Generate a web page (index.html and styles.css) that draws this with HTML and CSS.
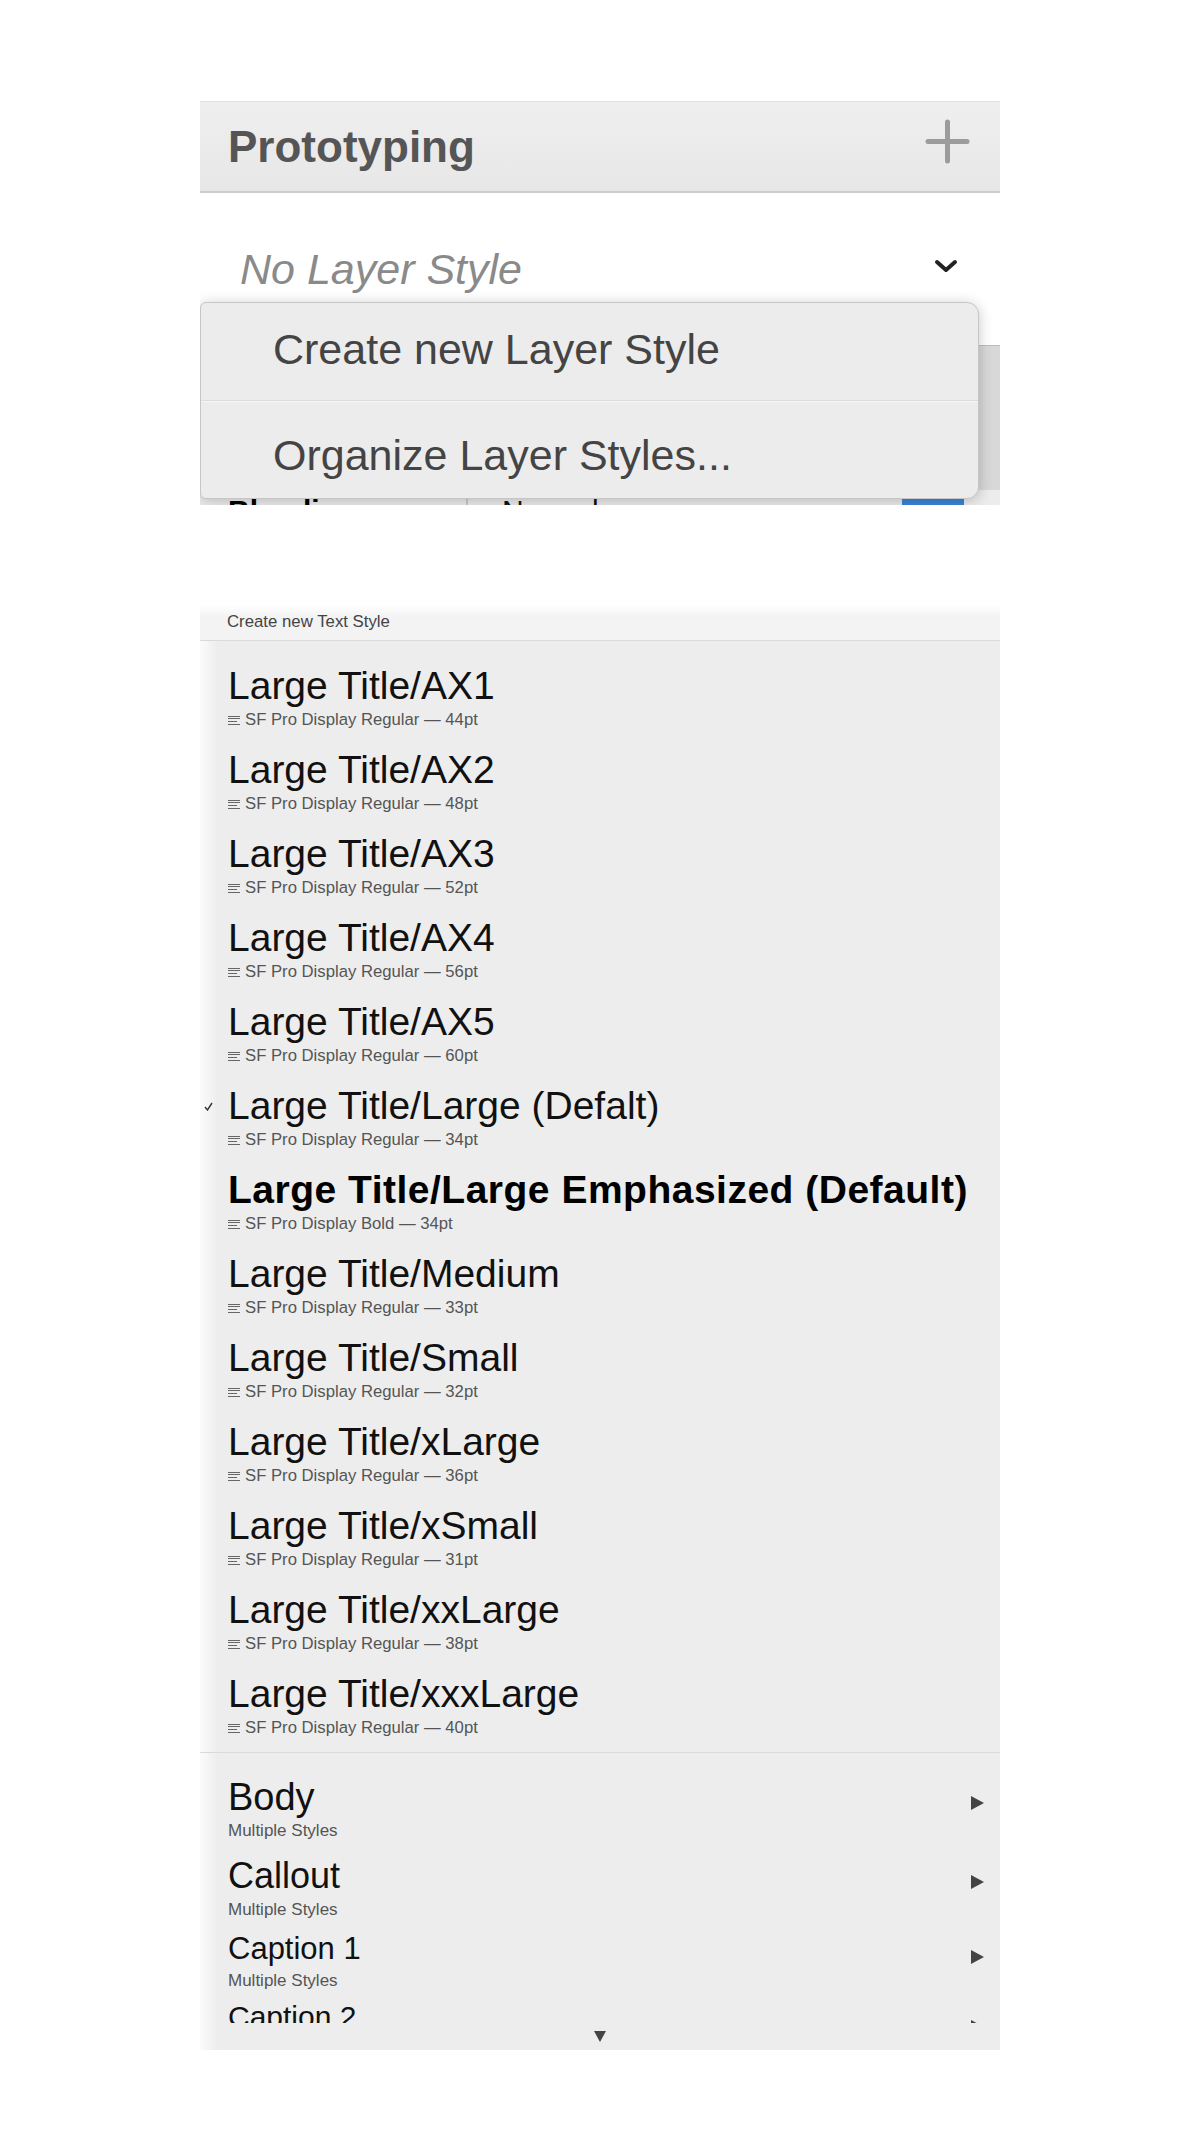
FILE: index.html
```html
<!DOCTYPE html>
<html lang="en">

<head>
    <meta charset="UTF-8">
    <meta name="viewport" content="width=device-width, initial-scale=1.0">
    <title>Layer &amp; Text Styles</title>
    <link rel="stylesheet" href="styles.css">
</head>

<body>
    <div class="page">

        <!-- Layer style picker -->
        <section class="inspector">
            <header class="inspector-head">
                <h2>Prototyping</h2>
                <svg class="plus" width="45" height="45" viewBox="0 0 45 45">
                    <path d="M22.5 3v39M3 22.5h39" stroke="#9c9c9c" stroke-width="5" stroke-linecap="round" fill="none" />
                </svg>
            </header>

            <div class="style-select">
                <span class="style-name">No Layer Style</span>
                <svg class="chevron" width="26" height="16" viewBox="0 0 26 16">
                    <path d="M4 4l9 8 9-8" stroke="#222" stroke-width="4" stroke-linecap="round" stroke-linejoin="round" fill="none" />
                </svg>
            </div>

            <div class="props">
                <div class="props-fill"></div>
                <div class="prop-row">
                    <span class="prop-label">Blending</span>
                    <span class="prop-value">Normal</span>
                    <span class="stepper"></span>
                </div>
            </div>

            <ul class="layer-menu">
                <li>Create new Layer Style</li>
                <li>Organize Layer Styles...</li>
            </ul>
        </section>

        <!-- Text style menu -->
        <section class="text-menu">
            <div class="text-new">Create new Text Style</div>

            <ul class="style-list">
                <li class="style-row">
                    <span class="check"></span>
                    <div>
                        <div class="style-title">Large Title/AX1</div>
                        <div class="style-sub"><i class="align-icon"></i>SF Pro Display Regular — 44pt</div>
                    </div>
                </li>
                <li class="style-row">
                    <span class="check"></span>
                    <div>
                        <div class="style-title">Large Title/AX2</div>
                        <div class="style-sub"><i class="align-icon"></i>SF Pro Display Regular — 48pt</div>
                    </div>
                </li>
                <li class="style-row">
                    <span class="check"></span>
                    <div>
                        <div class="style-title">Large Title/AX3</div>
                        <div class="style-sub"><i class="align-icon"></i>SF Pro Display Regular — 52pt</div>
                    </div>
                </li>
                <li class="style-row">
                    <span class="check"></span>
                    <div>
                        <div class="style-title">Large Title/AX4</div>
                        <div class="style-sub"><i class="align-icon"></i>SF Pro Display Regular — 56pt</div>
                    </div>
                </li>
                <li class="style-row">
                    <span class="check"></span>
                    <div>
                        <div class="style-title">Large Title/AX5</div>
                        <div class="style-sub"><i class="align-icon"></i>SF Pro Display Regular — 60pt</div>
                    </div>
                </li>
                <li class="style-row">
                    <span class="check">
                        <svg width="9" height="9" viewBox="0 0 9 9">
                            <path d="M1 5l2.5 3L8 1" stroke="#333" stroke-width="1.4" fill="none" />
                        </svg>
                    </span>
                    <div>
                        <div class="style-title">Large Title/Large (Defalt)</div>
                        <div class="style-sub"><i class="align-icon"></i>SF Pro Display Regular — 34pt</div>
                    </div>
                </li>
                <li class="style-row">
                    <span class="check"></span>
                    <div>
                        <div class="style-title bold">Large Title/Large Emphasized (Default)</div>
                        <div class="style-sub"><i class="align-icon"></i>SF Pro Display Bold — 34pt</div>
                    </div>
                </li>
                <li class="style-row">
                    <span class="check"></span>
                    <div>
                        <div class="style-title">Large Title/Medium</div>
                        <div class="style-sub"><i class="align-icon"></i>SF Pro Display Regular — 33pt</div>
                    </div>
                </li>
                <li class="style-row">
                    <span class="check"></span>
                    <div>
                        <div class="style-title">Large Title/Small</div>
                        <div class="style-sub"><i class="align-icon"></i>SF Pro Display Regular — 32pt</div>
                    </div>
                </li>
                <li class="style-row">
                    <span class="check"></span>
                    <div>
                        <div class="style-title">Large Title/xLarge</div>
                        <div class="style-sub"><i class="align-icon"></i>SF Pro Display Regular — 36pt</div>
                    </div>
                </li>
                <li class="style-row">
                    <span class="check"></span>
                    <div>
                        <div class="style-title">Large Title/xSmall</div>
                        <div class="style-sub"><i class="align-icon"></i>SF Pro Display Regular — 31pt</div>
                    </div>
                </li>
                <li class="style-row">
                    <span class="check"></span>
                    <div>
                        <div class="style-title">Large Title/xxLarge</div>
                        <div class="style-sub"><i class="align-icon"></i>SF Pro Display Regular — 38pt</div>
                    </div>
                </li>
                <li class="style-row">
                    <span class="check"></span>
                    <div>
                        <div class="style-title">Large Title/xxxLarge</div>
                        <div class="style-sub"><i class="align-icon"></i>SF Pro Display Regular — 40pt</div>
                    </div>
                </li>
            </ul>

            <ul class="group-list">
                <li class="group-item group-body">
                    <div>
                        <div class="group-title">Body</div>
                        <div class="group-sub">Multiple Styles</div>
                    </div>
                    <span class="submenu-arrow"></span>
                </li>
                <li class="group-item group-callout">
                    <div>
                        <div class="group-title">Callout</div>
                        <div class="group-sub">Multiple Styles</div>
                    </div>
                    <span class="submenu-arrow"></span>
                </li>
                <li class="group-item group-caption1">
                    <div>
                        <div class="group-title">Caption 1</div>
                        <div class="group-sub">Multiple Styles</div>
                    </div>
                    <span class="submenu-arrow"></span>
                </li>
                <li class="group-item group-caption2">
                    <div>
                        <div class="group-title">Caption 2</div>
                        <div class="group-sub">Multiple Styles</div>
                    </div>
                    <span class="submenu-arrow"></span>
                </li>
            </ul>

            <div class="scroll-down"><span class="down-arrow"></span></div>
        </section>

    </div>
</body>

</html>
```

FILE: styles.css
```css
body {
    margin: 0;
    background-color: #ffffff;
    font-family: "Liberation Sans", Arial, sans-serif;
    color: #111;
}

.page {
    width: 800px;
    padding: 101px 0 0 200px;
}

ul {
    list-style: none;
    margin: 0;
    padding: 0;
}

/* ---------- Layer style picker ---------- */

.inspector {
    position: relative;
    height: 404px;
    overflow: hidden;
    background-color: #ffffff;
}

.inspector-head {
    display: flex;
    justify-content: space-between;
    align-items: center;
    height: 89px;
    padding: 0 30px 0 28px;
    border-top: 1px solid #e2e2e2;
    border-bottom: 2px solid #cdcdcd;
    background: linear-gradient(#efefef, #e7e7e7);
}

.inspector-head h2 {
    margin: 0;
    font-size: 44px;
    font-weight: bold;
    color: #555;
}

.plus {
    align-self: flex-start;
    margin-top: 17px;
}

.style-select {
    display: flex;
    justify-content: space-between;
    align-items: flex-start;
    height: 101px;
    padding: 51px 41px 0 40px;
}

.style-name {
    font-size: 43px;
    line-height: 50px;
    font-style: italic;
    color: #8a8a8a;
}

.chevron {
    margin-top: 14px;
}

.props {
    background-color: #d8d8d8;
    border-top: 1px solid #bdbdbd;
}

.props-fill {
    height: 144px;
}

.prop-row {
    display: flex;
    align-items: flex-start;
    height: 40px;
    background-color: #ececec;
}

.prop-label {
    width: 238px;
    height: 40px;
    padding: 4px 0 0 28px;
    font-size: 30px;
    font-weight: bold;
    color: #000;
    border-right: 2px solid #c9c9c9;
}

.prop-value {
    flex: 1;
    padding: 4px 0 0 34px;
    font-size: 30px;
    color: #111;
}

.stepper {
    width: 62px;
    height: 40px;
    margin-right: 36px;
    border-radius: 4px;
    background-color: #3b86d8;
}

.layer-menu {
    position: absolute;
    top: 201px;
    left: 0;
    width: 777px;
    border: 1px solid #c6c6c6;
    border-radius: 6px 12px 12px 6px;
    background-color: #ececec;
    box-shadow: 0 2px 14px rgba(0, 0, 0, 0.22);
}

.layer-menu li {
    height: 97px;
    padding-left: 72px;
    font-size: 43px;
    line-height: 92px;
    color: #444;
}

.layer-menu li + li {
    height: 89px;
    padding-top: 8px;
    border-top: 1px solid #dcdcdc;
    box-shadow: inset 0 1px 0 #f6f6f6;
}

/* ---------- Text style menu ---------- */

.text-menu {
    height: 1445px;
    margin-top: 100px;
    background: linear-gradient(to right, #fbfbfb, #ededed 18px);
    overflow: hidden;
}

.text-new {
    height: 35px;
    padding-left: 27px;
    font-size: 16.8px;
    line-height: 33px;
    color: #444;
    background: linear-gradient(#ffffff, #f3f3f3 12px);
    border-bottom: 1px solid #dadada;
}

.style-list {
    display: flex;
    flex-direction: column;
    gap: 18px;
    padding: 23px 0 14px;
    border-bottom: 1px solid #dadada;
}

.style-row {
    display: flex;
}

.check {
    width: 28px;
    flex-shrink: 0;
}

.check svg {
    display: block;
    margin: 18px 0 0 4px;
}

.style-title {
    font-size: 39px;
    line-height: 44px;
    color: #111;
}

.style-title.bold {
    font-weight: bold;
    letter-spacing: 0.5px;
    color: #000;
}

.style-sub {
    display: flex;
    align-items: center;
    height: 20px;
    margin-top: 2px;
    font-size: 16.7px;
    color: #555;
}

.align-icon {
    width: 12px;
    height: 9px;
    margin-right: 5px;
    background:
        linear-gradient(#666, #666) 0 0 / 12px 1px no-repeat,
        linear-gradient(#666, #666) 0 2.6px / 12px 1px no-repeat,
        linear-gradient(#666, #666) 0 5.3px / 9px 1px no-repeat,
        linear-gradient(#666, #666) 0 8px / 12px 1px no-repeat;
}

.group-list {
    height: 248px;
    padding: 22px 16px 0 28px;
    overflow: hidden;
}

.group-item {
    display: flex;
    justify-content: space-between;
    align-items: flex-start;
}

.group-title {
    color: #111;
}

.group-sub {
    margin-top: 2px;
    font-size: 17px;
    line-height: 20px;
    color: #555;
}

.group-body .group-title {
    font-size: 38px;
    line-height: 44px;
}

.group-callout {
    margin-top: 13px;
}

.group-callout .group-title {
    font-size: 36px;
    line-height: 44px;
}

.group-caption1 {
    margin-top: 9px;
}

.group-caption1 .group-title {
    font-size: 31px;
    line-height: 40px;
}

.group-caption2 {
    margin-top: 8px;
}

.group-caption2 .group-title {
    font-size: 30px;
    line-height: 36px;
}

.submenu-arrow {
    width: 0;
    height: 0;
    margin-top: 21px;
    border-top: 7px solid transparent;
    border-bottom: 7px solid transparent;
    border-left: 13px solid #444;
}

.scroll-down {
    display: flex;
    justify-content: center;
    align-items: center;
    height: 27px;
}

.down-arrow {
    width: 0;
    height: 0;
    border-left: 6px solid transparent;
    border-right: 6px solid transparent;
    border-top: 11px solid #444;
}
```
